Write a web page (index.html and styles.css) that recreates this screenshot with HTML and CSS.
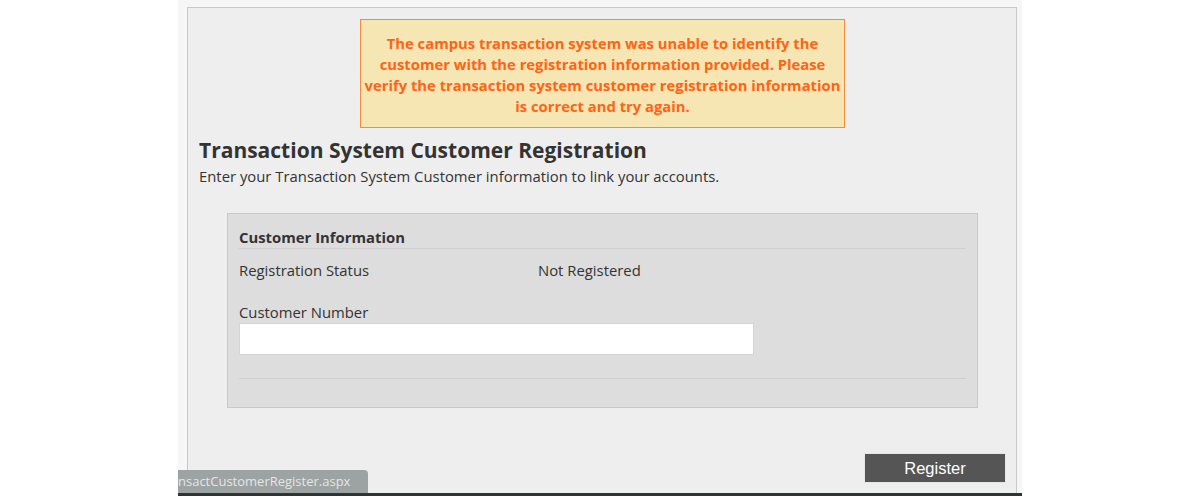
FILE: index.html
```html
<!DOCTYPE html>
<html>
<head>
<meta charset="utf-8">
<link rel="stylesheet" href="styles.css">
</head>
<body>
<div class="page">
  <div class="container">
    <div class="alert">The campus transaction system was unable to identify the customer with the registration information provided. Please verify the transaction system customer registration information is correct and try again.</div>
    <h1 class="title">Transaction System Customer Registration</h1>
    <p class="subtitle">Enter your Transaction System Customer information to link your accounts.</p>
    <div class="panel">
      <div class="panel-head">Customer Information</div>
      <div class="row">
        <span class="row-label">Registration Status</span>
        <span class="row-value">Not Registered</span>
      </div>
      <label class="field-label" for="cust">Customer Number</label>
      <input class="field-input" id="cust" type="text">
      <div class="panel-foot"></div>
    </div>
    <div class="actions">
      <button class="btn" type="button">Register</button>
    </div>
  </div>
  <div class="status-tip">nsactCustomerRegister.aspx</div>
</div>
</body>
</html>
```
FILE: styles.css
```css
html, body {
  margin: 0;
  padding: 0;
  background: #ffffff;
  height: 500px;
  overflow: hidden;
}
body {
  font-family: "Open Sans", "Noto Sans", sans-serif;
  color: #333333;
}
.page {
  position: relative;
  margin-left: 178px;
  width: 844px;
  height: 496px;
  background: #f6f6f6;
  border-bottom: 3px solid #2f3535;
  overflow: hidden;
  padding: 7px 5px 0 9px;
  box-sizing: border-box;
}
.container {
  background: #eeeeee;
  border: 1px solid #c9c9c9;
  border-bottom: none;
  height: 600px;
  padding: 11px 10px 0 11px;
  box-sizing: border-box;
}
.alert {
  width: 485px;
  box-sizing: border-box;
  margin: 0 auto;
  background: #f5e6b4;
  border: 1px solid #f78b3d;
  color: #ff6414;
  font-weight: 700;
  font-size: 14.8px;
  line-height: 21px;
  text-align: center;
  padding: 13px 3px 10px;
}
.title {
  margin: 8px 0 0;
  font-size: 21px;
  line-height: 28px;
  font-weight: 700;
  color: #333333;
}
.subtitle {
  margin: 1px 0 0;
  font-size: 14.85px;
  line-height: 22px;
  color: #333333;
}
.panel {
  margin: 26px 28px 0 28px;
  background: #dddddd;
  border: 1px solid #c8c8c8;
  padding: 13px 11px 0 11px;
  height: 195px;
  box-sizing: border-box;
}
.panel-head {
  font-size: 14.85px;
  font-weight: 700;
  line-height: 20px;
  padding-bottom: 1px;
  border-bottom: 1px solid #cfcfcf;
}
.row {
  display: flex;
  margin-top: 10px;
  font-size: 14.85px;
  line-height: 22px;
}
.row-label {
  width: 299px;
}
.field-label {
  display: block;
  margin-top: 20px;
  font-size: 14.85px;
  line-height: 22px;
}
.field-input {
  display: block;
  width: 515px;
  height: 32px;
  box-sizing: border-box;
  margin: 0;
  border: 1px solid #d4d4d4;
  background: #ffffff;
  font-size: 15px;
}
.panel-foot {
  margin-top: 23px;
  border-top: 1px solid #cfcfcf;
}
.actions {
  display: flex;
  justify-content: flex-end;
  margin-top: 45px;
}
.btn {
  width: 142px;
  height: 30px;
  background: #555555;
  color: #ffffff;
  border: 1px solid #e6e6e6;
  font-family: "Liberation Sans", Arial, sans-serif;
  font-size: 16.5px;
  padding: 0;
}
.status-tip {
  position: absolute;
  left: 0;
  bottom: 0;
  width: 190px;
  height: 23px;
  background: #9da2a2;
  color: #e4e6e6;
  font-size: 13px;
  line-height: 23px;
  border-top-right-radius: 4px;
  white-space: nowrap;
  overflow: hidden;
}
```
